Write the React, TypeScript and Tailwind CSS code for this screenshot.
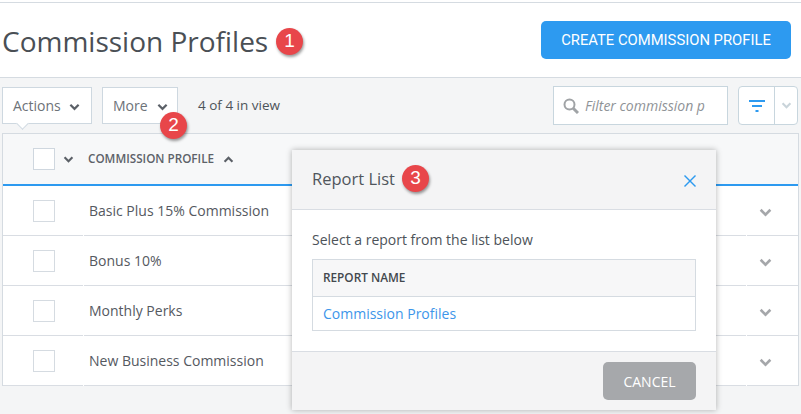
const Chevron = ({ className = "", up = false }: { className?: string; up?: boolean }) => (
  <svg viewBox="0 0 12 8" className={className} fill="none" stroke="currentColor" strokeWidth="2.4">
    <polyline points={up ? "1.5,6.5 6,2 10.5,6.5" : "1.5,1.5 6,6 10.5,1.5"} />
  </svg>
);

const Badge = ({ n, className }: { n: number; className: string }) => (
  <div
    className={`absolute flex h-[27px] w-[27px] items-center justify-center rounded-full bg-[#e8464a] text-[19px] text-white shadow-[1px_2px_3px_rgba(0,0,0,0.4)] font-['Liberation_Sans',sans-serif] ${className}`}
  >
    {n}
  </div>
);

const rows = ["Basic Plus 15% Commission", "Bonus 10%", "Monthly Perks", "New Business Commission"];

const App = () => {
  return (
    <div className="relative h-[414px] w-[801px] overflow-hidden bg-[#f4f5f6] font-['Open_Sans',sans-serif] text-[#4d5359]">
      {/* page header */}
      <div className="bg-white pt-[2px]">
        <div className="flex h-[76px] items-center justify-between border-t border-b border-[#d5dbe1] pl-[2px] pr-[10px]">
          <h1 className="mt-[2px] text-[28px] leading-none text-[#4a4f55]">Commission Profiles</h1>
          <button className="mb-[1px] h-[38px] w-[250px] rounded-[5px] bg-[#2d9af0] pt-[2px] text-[14.8px] text-white font-['Roboto',sans-serif]">
            CREATE COMMISSION PROFILE
          </button>
        </div>
      </div>

      {/* toolbar */}
      <div className="flex h-[55px] items-center pl-[2px] pr-[3px]">
        <div className="relative mr-[10px] flex h-[37px] w-[90px] items-center border border-[#ced8e0] bg-white pl-[10px] text-[14px] text-[#6d7278]">
          Actions
          <Chevron className="ml-[8px] mt-[2px] h-[8px] w-[11px] text-[#5b6067]" />
          <div className="absolute -bottom-[5px] left-[15px] h-[9px] w-[9px] rotate-45 border-r border-b border-[#ced8e0] bg-white" />
        </div>
        <div className="mr-[20px] flex h-[37px] w-[76px] items-center border border-[#ced8e0] bg-white pl-[10px] text-[14px] text-[#6d7278]">
          More
          <Chevron className="ml-[9px] mt-[2px] h-[8px] w-[11px] text-[#5b6067]" />
        </div>
        <span className="text-[13.5px] text-[#4d5359]">4 of 4 in view</span>
        <div className="ml-auto flex h-[39px] w-[175px] items-center overflow-hidden border border-[#c8d6de] bg-white pl-[9px]">
          <svg viewBox="0 0 16 16" className="h-[16px] w-[16px] shrink-0 text-[#a0a3a6]" fill="none" stroke="currentColor">
            <circle cx="6.5" cy="6.5" r="5" strokeWidth="2" />
            <line x1="10.2" y1="10.2" x2="15" y2="15" strokeWidth="3" />
          </svg>
          <span className="ml-[6px] whitespace-nowrap text-[14px] italic text-[#8f9397]">Filter commission p</span>
        </div>
        <div className="ml-[10px] flex h-[39px] w-[60px] rounded-[4px] border border-[#c8d6de] bg-white">
          <div className="flex w-[36px] items-center justify-center border-r border-[#c8d6de]">
            <svg viewBox="0 0 16 12" className="h-[12px] w-[16px] text-[#2d9af0]" fill="currentColor">
              <rect x="0" y="0" width="16" height="2" />
              <rect x="3" y="5" width="10" height="2" />
              <rect x="6.5" y="10" width="3" height="2" />
            </svg>
          </div>
          <div className="flex flex-1 items-center justify-center">
            <Chevron className="h-[7px] w-[11px] text-[#c9d4da]" />
          </div>
        </div>
      </div>

      {/* table */}
      <div className="ml-[2px] w-[797px] border-x border-t border-[#d5dbe1] bg-white">
        <div className="flex h-[52px] items-center border-b-2 border-[#2d9af0] bg-[#f7f8f9] pl-[30px]">
          <div className="h-[22px] w-[22px] border border-[#cfd7df] bg-white" />
          <Chevron className="ml-[8px] h-[7px] w-[11px] text-[#5b6067]" />
          <span className="ml-[14px] text-[11.7px] font-semibold text-[#5d6269]">COMMISSION PROFILE</span>
          <Chevron up className="ml-[9px] h-[7px] w-[11px] text-[#5b6067]" />
        </div>
        {rows.map((name) => (
          <div key={name} className="flex h-[50px]">
            <div className="flex w-[80px] shrink-0 items-center border-b border-[#d9dde3] pl-[30px] pt-[1px]">
              <div className="h-[22px] w-[22px] border border-[#d5dbe1]" />
            </div>
            <div className="ml-[1px] flex flex-1 items-center border-b border-[#d9dde3] pl-[5px] text-[14px] text-[#55595f]">
              {name}
            </div>
            <div className="ml-[1px] flex w-[51px] shrink-0 items-center border-b border-[#d9dde3] pl-[12px] pt-[3px]">
              <Chevron className="h-[9px] w-[13px] text-[#a5a7aa]" />
            </div>
          </div>
        ))}
      </div>

      {/* report list dialog */}
      <div className="absolute left-[292px] top-[150px] flex h-[260px] w-[424px] flex-col bg-white shadow-[0_0_6px_rgba(0,0,0,0.3)]">
        <div className="flex h-[60px] items-center justify-between border-b border-[#d9dde3] bg-[#f4f4f5] pl-[20px] pr-[20px]">
          <span className="text-[16.5px] text-[#50565c]">Report List</span>
          <svg viewBox="0 0 12 12" className="mt-[2px] h-[12px] w-[12px] text-[#2d9af0]" fill="none" stroke="currentColor" strokeWidth="1.4">
            <line x1="0.5" y1="0.5" x2="11.5" y2="11.5" />
            <line x1="11.5" y1="0.5" x2="0.5" y2="11.5" />
          </svg>
        </div>
        <div className="flex-1 px-[20px] pt-[20px]">
          <p className="text-[14px] leading-[20px] text-[#4d5359]">Select a report from the list below</p>
          <div className="mt-[9px] border border-[#d5dbe1]">
            <div className="flex h-[37px] items-center border-b border-[#d5dbe1] bg-[#f7f7f8] pl-[10px] text-[11.8px] font-semibold text-[#43484e]">
              REPORT NAME
            </div>
            <div className="flex h-[33px] items-center pl-[10px] text-[14px] text-[#3d96ea]">Commission Profiles</div>
          </div>
        </div>
        <div className="flex h-[59px] items-center justify-end border-t border-[#d9dde3] bg-[#f4f4f5] pr-[20px]">
          <button className="h-[38px] w-[93px] rounded-[5px] bg-[#a6a8ab] text-[14px] text-white">CANCEL</button>
        </div>
      </div>

      <Badge n={1} className="left-[276px] top-[28px]" />
      <Badge n={2} className="left-[160px] top-[112px]" />
      <Badge n={3} className="left-[402px] top-[165px]" />
    </div>
  );
};

export default App;
